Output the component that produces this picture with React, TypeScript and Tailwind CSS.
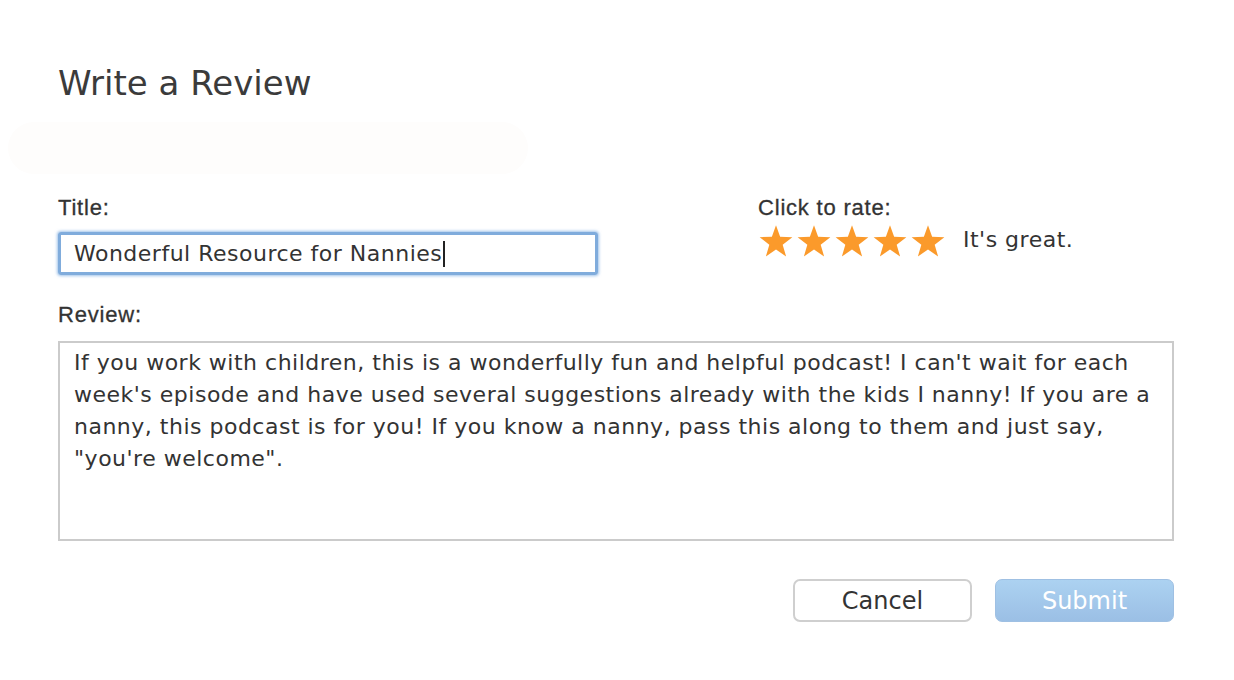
import React from "react";

const body = { fontFamily: '"DejaVu Sans", Verdana, sans-serif' };
const label = { fontFamily: '"Liberation Sans", Arial, sans-serif' };

function Star() {
  return (
    <svg width="36" height="35" viewBox="0 0 24 23" className="block">
      <path
        d="M12 0.6 L14.75 8.35 L22.9 8.6 L16.45 13.6 L18.75 21.5 L12 16.85 L5.25 21.5 L7.55 13.6 L1.1 8.6 L9.25 8.35 Z"
        fill="#fb9a2b"
      />
    </svg>
  );
}

export default function App() {
  return (
    <div className="w-[1234px] h-[680px] bg-white overflow-hidden flex flex-col pl-[58px] pr-[60px]" style={body}>
      <h1 className="mt-[62px] text-[34px] leading-[42px] text-[#3b3b3b]">Write a Review</h1>
      <div className="-ml-[50px] mt-[18px] h-[52px] w-[520px] rounded-full bg-[#fefdfc]" />
      <div className="mt-[22px] flex">
        <div className="flex flex-col w-[540px]">
          <div className="text-[22px] leading-[24px] tracking-[0.8px] text-[#333] [-webkit-text-stroke:0.3px_#333]" style={label}>Title:</div>
          <div className="mt-[12px] h-[43px] rounded-[3px] border-[3px] border-[#80acdc] shadow-[0_0_3px_1px_rgba(120,170,225,0.7)] flex items-center pl-[13px]">
            <span className="text-[22px] tracking-[0.5px] text-[#333] leading-none">Wonderful Resource for Nannies</span>
            <span className="w-[1.5px] h-[26px] bg-[#222] ml-[1px]" />
          </div>
        </div>
        <div className="ml-[160px] flex flex-col">
          <div className="text-[22px] leading-[24px] tracking-[0.8px] text-[#333] [-webkit-text-stroke:0.3px_#333]" style={label}>Click to rate:</div>
          <div className="mt-[4px] flex items-center">
            <div className="flex gap-[2px]">
              <Star />
              <Star />
              <Star />
              <Star />
              <Star />
            </div>
            <span className="ml-[17px] text-[22px] tracking-[0.5px] text-[#333] -mt-[4px]">It's great.</span>
          </div>
        </div>
      </div>
      <div className="mt-[28px] text-[22px] leading-[24px] tracking-[0.8px] text-[#333] [-webkit-text-stroke:0.3px_#333]" style={label}>Review:</div>
      <div className="mt-[14px] h-[200px] border-2 border-[#cbcbcb] pl-[14px] pt-[4px] text-[22px] tracking-[0.5px] leading-[32px] text-[#333] whitespace-pre-line">
        {"If you work with children, this is a wonderfully fun and helpful podcast! I can't wait for each\nweek's episode and have used several suggestions already with the kids I nanny! If you are a\nnanny, this podcast is for you! If you know a nanny, pass this along to them and just say,\n\"you're welcome\"."}
      </div>
      <div className="mt-[38px] flex justify-end gap-[23px]">
        <button className="w-[179px] h-[43px] rounded-[7px] border-2 border-[#cfcfcf] bg-white text-[24px] text-[#333] flex items-center justify-center">Cancel</button>
        <button className="w-[179px] h-[43px] rounded-[7px] border border-[#9fc0e3] bg-gradient-to-b from-[#acd2f1] to-[#9bbfe5] text-[24px] text-white flex items-center justify-center">Submit</button>
      </div>
    </div>
  );
}
